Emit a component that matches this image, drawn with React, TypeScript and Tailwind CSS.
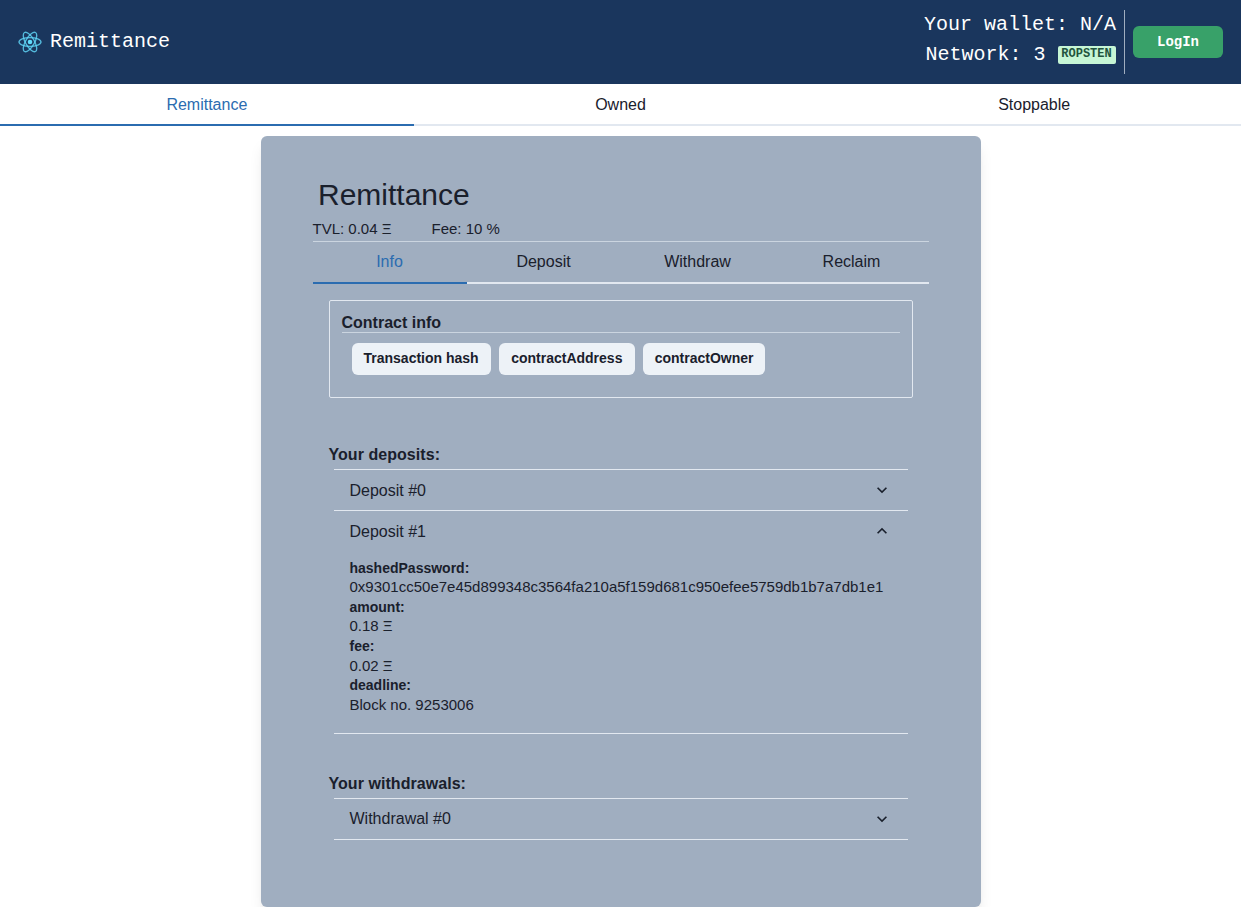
import React from "react";

const Chevron = ({ up = false }: { up?: boolean }) => (
  <svg viewBox="0 0 24 24" className={up ? "size-5 rotate-180" : "size-5"} fill="currentColor" aria-hidden="true">
    <path d="M16.59 8.59L12 13.17 7.41 8.59 6 10l6 6 6-6z" />
  </svg>
);

const ReactLogo = () => (
  <svg viewBox="-12 -11 24 22" className="h-[22px] w-6" fill="none" stroke="#61DAFB" strokeOpacity="0.8" strokeWidth="1.35" aria-hidden="true">
    <circle r="2.3" fill="#61DAFB" stroke="none" />
    <ellipse rx="11" ry="4.4" />
    <ellipse rx="11" ry="4.4" transform="rotate(60)" />
    <ellipse rx="11" ry="4.4" transform="rotate(120)" />
  </svg>
);

const Tabs = ({ items, className }: { items: string[]; className: string }) => (
  <div className={`flex h-[42px] ${className}`} role="tablist">
    {items.map((item, i) => (
      <button
        key={item}
        role="tab"
        className={
          i === 0
            ? "flex-1 border-b-2 border-[#2b6cb0] text-base text-[#2b6cb0]"
            : "flex-1 border-b-2 border-[#e2e8f0] text-base"
        }
      >
        {item}
      </button>
    ))}
  </div>
);

const Row = ({
  label,
  open = false,
  labelClass = "pt-0.5",
  children,
}: {
  label: string;
  open?: boolean;
  labelClass?: string;
  children?: React.ReactNode;
}) => (
  <div className="border-t border-[#e2e8f0] last:border-b">
    <button className="flex h-10 w-full items-center justify-between px-4 text-base">
      <span className={labelClass}>{label}</span>
      <Chevron up={open} />
    </button>
    {children}
  </div>
);

const details = [
  ["hashedPassword:", "0x9301cc50e7e45d899348c3564fa210a5f159d681c950efee5759db1b7a7db1e1"],
  ["amount:", "0.18 Ξ"],
  ["fee:", "0.02 Ξ"],
  ["deadline:", "Block no. 9253006"],
];

export default function App() {
  return (
    <div className="h-[907px] overflow-hidden bg-white font-['Liberation_Sans',Arial,sans-serif] text-[#1a202c]">
      <header className="flex h-[84px] items-center justify-between bg-[#1a365d] px-[18px] font-['Liberation_Mono',monospace] text-xl text-white">
        <div className="flex items-center gap-2">
          <ReactLogo />
          <span>Remittance</span>
        </div>
        <div className="flex items-center">
          <div className="flex h-16 flex-col items-end border-r border-[#a0aec0] pr-2">
            <div className="h-[30px] leading-[30px]">Your wallet: N/A</div>
            <div className="flex h-[30px] items-center gap-[12.6px] leading-[30px]">
              <span>Network: 3</span>
              <span className="h-[18px] w-[58px] rounded-xs bg-[#c6f6d5] pr-px text-center text-xs leading-[17px] font-bold text-[#22543d]">
                ROPSTEN
              </span>
            </div>
          </div>
          <button className="ml-2 h-8 w-[90px] rounded-md bg-[#38a169] text-sm font-bold">LogIn</button>
        </div>
      </header>
      <Tabs items={["Remittance", "Owned", "Stoppable"]} className="[&>button]:pt-0.5" />
      <main className="mx-auto mt-2.5 h-[771px] w-[720px] rounded-md bg-[#a0aec0] px-[52px] pt-[34px] shadow-lg">
        <h1 className="h-12 pl-[5.5px] text-[30px] leading-[50px]">Remittance</h1>
        <div className="flex h-6 gap-10 border-b border-[#cbd5e0] text-[15px] leading-[22px]">
          <span>TVL: 0.04 Ξ</span>
          <span>Fee: 10 %</span>
        </div>
        <Tabs items={["Info", "Deposit", "Withdraw", "Reclaim"]} className="[&>button]:pt-0" />
        <div className="px-4 pt-4">
          <section className="h-[98px] rounded-xs border border-[#e2e8f0] px-3 pt-[11px]">
            <h2 className="h-[21px] border-b border-[#cbd5e0] text-base leading-[22px] font-bold">Contract info</h2>
            <div className="flex gap-2 pt-2.5 pl-2.5">
              {["Transaction hash", "contractAddress", "contractOwner"].map((t) => (
                <button key={t} className="h-8 rounded-md bg-[#edf2f7] px-3 pb-0.5 text-sm font-bold first:pr-[12.5px] last:px-[11.7px] nth-2:pr-[12.6px]">
                  {t}
                </button>
              ))}
            </div>
          </section>
          <h2 className="mt-11 h-[27px] text-base leading-[26px] font-bold tracking-[0.05px]">Your deposits:</h2>
          <div className="mx-[5px]">
            <Row label="Deposit #0" />
            <Row label="Deposit #1" open>
              <dl className="h-[182px] px-4 pt-[6.5px]">
                {details.map(([k, v]) => (
                  <React.Fragment key={k}>
                    <dt className="h-[19.6px] text-sm leading-5 font-bold">{k}</dt>
                    <dd className="h-[19.7px] text-[15px] leading-5">{v}</dd>
                  </React.Fragment>
                ))}
              </dl>
            </Row>
          </div>
          <h2 className="mt-[37px] h-[27px] text-base leading-[26px] font-bold tracking-[0.05px]">Your withdrawals:</h2>
          <div className="mx-[5px]">
            <Row label="Withdrawal #0" labelClass="pt-0" />
          </div>
        </div>
      </main>
    </div>
  );
}
